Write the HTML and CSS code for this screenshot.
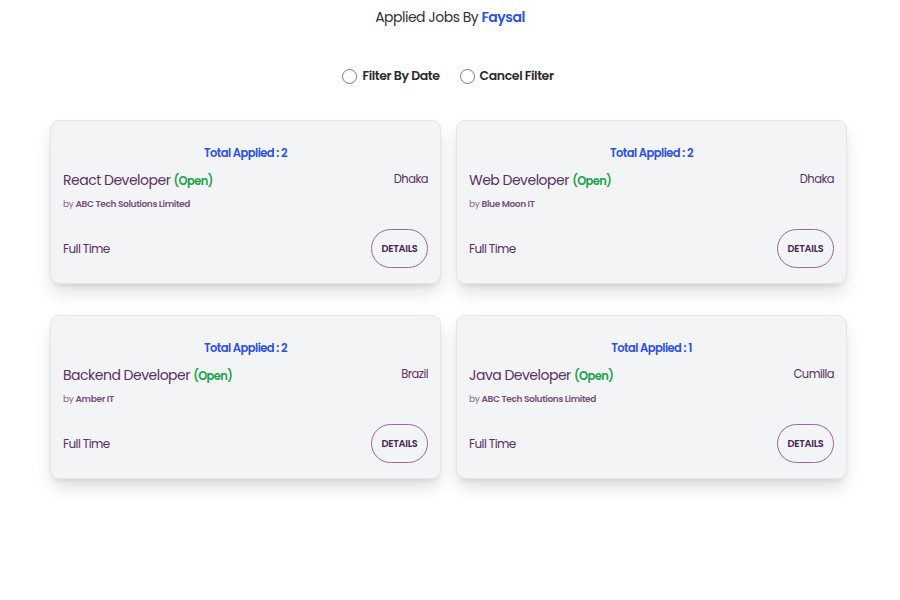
FILE: index.html
```html
<!DOCTYPE html>
<html>
<head>
<meta charset="utf-8">
<link rel="stylesheet" href="styles.css">
</head>
<body>
<h1 class="page-title">Applied Jobs By <span class="user">Faysal</span></h1>
<div class="filters">
  <label class="filter"><span class="radio"></span>Filter By Date</label>
  <label class="filter"><span class="radio"></span>Cancel Filter</label>
</div>
<div class="grid">
  <div class="card">
    <div class="total">Total Applied : 2</div>
    <div class="row">
      <div class="job">React Developer <span class="status">(Open)</span></div>
      <div class="loc">Dhaka</div>
    </div>
    <div class="company">by <b>ABC Tech Solutions Limited</b></div>
    <div class="bottom">
      <div class="type">Full Time</div>
      <button class="details">DETAILS</button>
    </div>
  </div>
  <div class="card">
    <div class="total">Total Applied : 2</div>
    <div class="row">
      <div class="job">Web Developer <span class="status">(Open)</span></div>
      <div class="loc">Dhaka</div>
    </div>
    <div class="company">by <b>Blue Moon IT</b></div>
    <div class="bottom">
      <div class="type">Full Time</div>
      <button class="details">DETAILS</button>
    </div>
  </div>
  <div class="card">
    <div class="total">Total Applied : 2</div>
    <div class="row">
      <div class="job">Backend Developer <span class="status">(Open)</span></div>
      <div class="loc">Brazil</div>
    </div>
    <div class="company">by <b>Amber IT</b></div>
    <div class="bottom">
      <div class="type">Full Time</div>
      <button class="details">DETAILS</button>
    </div>
  </div>
  <div class="card">
    <div class="total">Total Applied : 1</div>
    <div class="row">
      <div class="job">Java Developer <span class="status">(Open)</span></div>
      <div class="loc">Cumilla</div>
    </div>
    <div class="company">by <b>ABC Tech Solutions Limited</b></div>
    <div class="bottom">
      <div class="type">Full Time</div>
      <button class="details">DETAILS</button>
    </div>
  </div>
</div>
</body>
</html>
```
FILE: styles.css
```css
* { box-sizing: border-box; }
html { background: #ffffff; }
body {
  margin: 0;
  min-height: 600px;
  padding-bottom: 40px;
  background: #ffffff;
  font-family: "Poppins", Inter, "Noto Sans", sans-serif;
  color: #333;
}
.page-title {
  margin: 0;
  padding-top: 7px;
  text-align: center;
  font-size: 14px;
  letter-spacing: -0.5px;
  font-weight: 400;
  color: #333;
  line-height: 20px;
}
.user { color: #2b50e6; font-weight: 600; }
.filters {
  display: flex;
  justify-content: center;
  gap: 20px;
  margin-top: 39px;
  padding-right: 4px;
}
.filter {
  display: flex;
  align-items: center;
  gap: 5px;
  font-size: 12.5px;
  letter-spacing: -0.4px;
  font-weight: 600;
  color: #2a2a2a;
  line-height: 20px;
}
.radio {
  width: 15px;
  height: 15px;
  border: 1px solid #7a7a7a;
  border-radius: 50%;
  background: #fff;
}
.grid {
  width: 797px;
  margin: 34px 0 0 calc(50% - 400px);
  display: grid;
  grid-template-columns: 1fr 1fr;
  column-gap: 15px;
  row-gap: 31px;
}
.card {
  background: #f3f4f6;
  border: 1px solid #e3e5ea;
  border-radius: 9px;
  box-shadow: 0 10px 18px -2px rgba(0,0,0,0.13), 0 4px 6px -3px rgba(0,0,0,0.1);
  padding: 24px 12px 0 12px;
  height: 164px;
  color: #5c3063;
}
.total {
  text-align: center;
  color: #2b50e6;
  font-weight: 600;
  font-size: 11.5px;
  letter-spacing: -0.55px;
  line-height: 16px;
}
.row {
  display: flex;
  justify-content: space-between;
  align-items: flex-start;
  margin-top: 9px;
}
.job {
  font-size: 14px;
  letter-spacing: -0.5px;
  line-height: 20px;
  color: #5c3063;
}
.status {
  color: #1ea34a;
  font-weight: 600;
  font-size: 11.5px;
  letter-spacing: -0.6px;
}
.loc {
  font-size: 11.5px;
  letter-spacing: -0.55px;
  line-height: 18px;
  color: #5c3063;
}
.company {
  font-size: 9px;
  letter-spacing: -0.35px;
  line-height: 12px;
  color: #8a6a8f;
  margin-top: 7px;
}
.company b { color: #7a4f80; font-weight: 600; }
.bottom {
  display: flex;
  justify-content: space-between;
  align-items: center;
  margin-top: 19px;
}
.type {
  font-size: 12px;
  letter-spacing: -0.6px;
  color: #5c3063;
}
.details {
  width: 57px;
  height: 39px;
  border: 1px solid #9d64a6;
  border-radius: 20px;
  background: transparent;
  font-family: inherit;
  font-size: 9.8px;
  letter-spacing: -0.3px;
  font-weight: 600;
  color: #4b2452;
  padding: 0;
}
```
